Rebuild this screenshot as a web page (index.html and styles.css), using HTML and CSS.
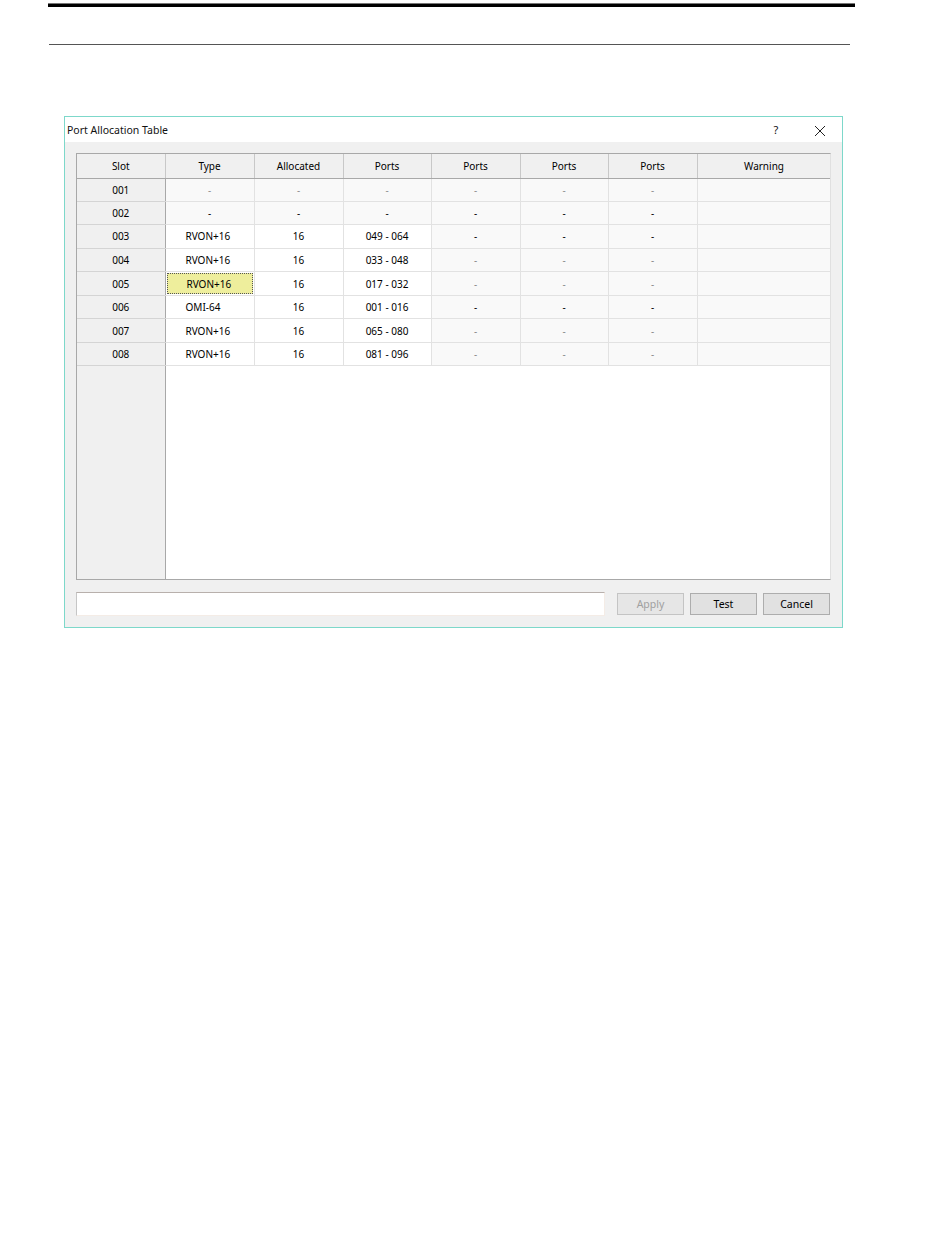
FILE: index.html
```html
<!DOCTYPE html>
<html lang="en">
<head>
	<meta charset="UTF-8">
	<title>Port Allocation Table</title>
	<link rel="stylesheet" href="styles.css">
</head>
<body>
	<div class="ruleThick"></div>
	<div class="ruleThin"></div>

	<div class="dialog">
		<div class="titleBar">
			<span class="title">Port Allocation Table</span>
			<span class="helpButton">?</span>
			<span class="closeButton">
				<svg width="12" height="12" viewBox="0 0 12 12">
					<path d="M1 1 L11 11 M11 1 L1 11" stroke="#222" stroke-width="1" fill="none"/>
				</svg>
			</span>
		</div>
		<div class="dialogBody">
			<div class="grid">
				<table>
					<colgroup>
						<col style="width:88px">
						<col style="width:89px">
						<col style="width:89px">
						<col style="width:88px">
						<col style="width:89px">
						<col style="width:88px">
						<col style="width:89px">
						<col style="width:134px">
					</colgroup>
					<thead>
						<tr>
							<th>Slot</th>
							<th>Type</th>
							<th>Allocated</th>
							<th>Ports</th>
							<th>Ports</th>
							<th>Ports</th>
							<th>Ports</th>
							<th>Warning</th>
						</tr>
					</thead>
					<tbody>
						<tr class="empty light">
							<td class="slot">001</td>
							<td class="type center">-</td>
							<td>-</td>
							<td>-</td>
							<td class="grey">-</td>
							<td class="grey">-</td>
							<td class="grey">-</td>
							<td class="grey"></td>
						</tr>
						<tr class="empty">
							<td class="slot">002</td>
							<td class="type center">-</td>
							<td>-</td>
							<td>-</td>
							<td class="grey">-</td>
							<td class="grey">-</td>
							<td class="grey">-</td>
							<td class="grey"></td>
						</tr>
						<tr>
							<td class="slot">003</td>
							<td class="type">RVON+16</td>
							<td>16</td>
							<td>049 - 064</td>
							<td class="grey">-</td>
							<td class="grey">-</td>
							<td class="grey">-</td>
							<td class="grey"></td>
						</tr>
						<tr class="dim">
							<td class="slot">004</td>
							<td class="type">RVON+16</td>
							<td>16</td>
							<td>033 - 048</td>
							<td class="grey">-</td>
							<td class="grey">-</td>
							<td class="grey">-</td>
							<td class="grey"></td>
						</tr>
						<tr class="dim">
							<td class="slot">005</td>
							<td class="type current"><span>RVON+16</span></td>
							<td>16</td>
							<td>017 - 032</td>
							<td class="grey">-</td>
							<td class="grey">-</td>
							<td class="grey">-</td>
							<td class="grey"></td>
						</tr>
						<tr>
							<td class="slot">006</td>
							<td class="type">OMI-64</td>
							<td>16</td>
							<td>001 - 016</td>
							<td class="grey">-</td>
							<td class="grey">-</td>
							<td class="grey">-</td>
							<td class="grey"></td>
						</tr>
						<tr class="dim">
							<td class="slot">007</td>
							<td class="type">RVON+16</td>
							<td>16</td>
							<td>065 - 080</td>
							<td class="grey">-</td>
							<td class="grey">-</td>
							<td class="grey">-</td>
							<td class="grey"></td>
						</tr>
						<tr class="dim">
							<td class="slot">008</td>
							<td class="type">RVON+16</td>
							<td>16</td>
							<td>081 - 096</td>
							<td class="grey">-</td>
							<td class="grey">-</td>
							<td class="grey">-</td>
							<td class="grey"></td>
						</tr>
						<tr class="filler">
							<td class="slot"></td>
							<td colspan="7"></td>
						</tr>
					</tbody>
				</table>
			</div>
			<div class="footer">
				<div class="statusBox"></div>
				<div class="button disabled">Apply</div>
				<div class="button">Test</div>
				<div class="button">Cancel</div>
			</div>
		</div>
	</div>
</body>
</html>
```

FILE: styles.css
```css
*{
	margin: 0;
	padding: 0;
	box-sizing: border-box;
}
body{
	padding-top: 3px;
	font-family: "Noto Sans", "Open Sans", sans-serif;
	color: #000;
	background: #fff;
}
.ruleThick{
	margin-left: 48px;
	width: 807px;
	height: 4px;
	background-color: #000;
	border-top: 1px solid #777;
}
.ruleThin{
	margin-left: 49px;
	margin-top: 37px;
	width: 801px;
	height: 1px;
	background-color: #555;
}

/* dialog window */
.dialog{
	margin-left: 64px;
	margin-top: 71px;
	width: 779px;
	border: 1px solid #7dd8ca;
	background-color: #f0f0f0;
}
.titleBar{
	display: flex;
	align-items: center;
	height: 25px;
	background-color: #fff;
	font-size: 10.5px;
	color: #111;
}
.titleBar>.title{
	flex: 1;
	padding-left: 2px;
	padding-top: 1px;
}
.titleBar>.helpButton{
	width: 20px;
	margin-right: 10px;
	font-size: 11px;
	text-align: center;
}
.titleBar>.closeButton{
	display: flex;
	justify-content: center;
	width: 46px;
	padding-left: 1px;
	padding-top: 2px;
}
.dialogBody{
	padding: 11px 11px 11px 11px;
}

/* allocation grid */
.grid{
	height: 427px;
	border: 1px solid #a8a8a8;
	border-right-color: #e0e0e0;
	background-color: #fff;
	overflow: hidden;
}
table{
	table-layout: fixed;
	border-collapse: collapse;
	width: 753px;
	font-size: 10px;
}
th{
	height: 24px;
	padding-top: 1px;
	font-weight: normal;
	background-color: #f0f0f0;
	border-right: 1px solid #c8c8c8;
	border-bottom: 1px solid #a8a8a8;
	text-align: center;
}
td{
	height: 23.4px;
	text-align: center;
	border-right: 1px solid #e2e2e2;
	border-bottom: 1px solid #e2e2e2;
	background-color: #fff;
}
td.slot{
	background-color: #f0f0f0;
	border-right: 1px solid #a8a8a8;
	border-bottom: 1px solid #d4d4d4;
}
td.type{
	text-align: left;
	padding-left: 20px;
}
td.type.center{
	text-align: center;
	padding-left: 0;
}
td.grey,
tr.empty td{
	background-color: #f9f9f9;
}
tr.empty td.slot{
	background-color: #f0f0f0;
}
tr.light td{
	color: #909090;
}
tr.light td.slot{
	color: #000;
}
tr.dim td.grey{
	color: #8a8a8a;
}
td.current{
	padding: 1px;
}
td.current>span{
	display: block;
	height: 21px;
	line-height: 20px;
	padding-left: 19px;
	background-color: #eeee9c;
	border: 1px dotted #555;
}
tr.filler td{
	height: 213px;
	border-bottom: none;
	border-right: none;
}
tr.filler td.slot{
	border-top: 1px solid #a8a8a8;
	border-right: 1px solid #a8a8a8;
}

/* bottom row */
.footer{
	display: flex;
	align-items: center;
	margin-top: 12px;
}
.statusBox{
	width: 529px;
	height: 24px;
	background-color: #fff;
	border: 1px solid #b8b0ac;
	border-left-color: #c6c6c6;
	border-bottom-color: #f4ece6;
	border-right-color: #f4ece6;
	margin-right: 12px;
}
.button{
	width: 67px;
	height: 22px;
	line-height: 20px;
	margin-left: 6px;
	font-size: 10.5px;
	text-align: center;
	background-color: #e1e1e1;
	border: 1px solid #adadad;
}
.button.disabled{
	margin-left: 0;
	color: #a0a0a0;
	background-color: #e6e6e6;
	border-color: #c4c4c4;
}
```
